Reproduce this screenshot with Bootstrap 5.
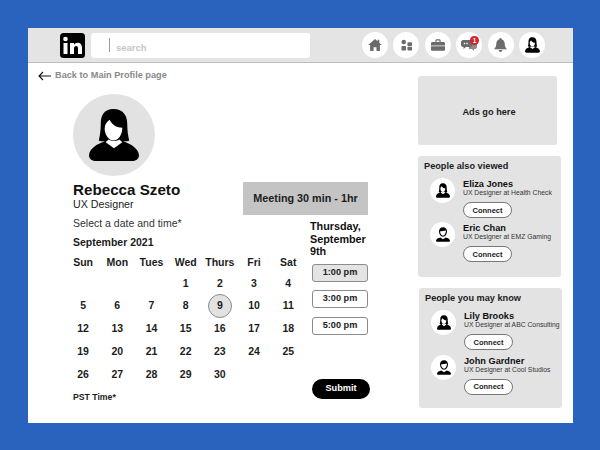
<!DOCTYPE html>
<html lang="en"><head><meta charset="utf-8"><title>Book a meeting</title>
<link href="https://cdn.jsdelivr.net/npm/bootstrap@5.3.0/dist/css/bootstrap.min.css" rel="stylesheet">
<style>
html,body{height:450px;overflow:hidden}
body{background:#2a63bd;padding:28px 27px 27px 28px;font-family:"Liberation Sans",Arial,sans-serif;color:#1c1c1c}
.sheet{height:395px;background:#fff}
.topbar{height:35px;background:#e4e4e4;border-bottom:1px solid #bdbdbd;padding:0 0 0 32px;flex:none}
.logo-mark{width:25px;height:25px;flex:none}
.searchbar{width:219px;height:25px;background:#fff;border-radius:3px;margin-left:6px;padding-left:18px;font-size:9.5px;font-weight:700;color:#c6c6c6}
.search-caret{width:1px;height:14px;background:#9a9a9a;margin-right:6px}
.search-word{padding-top:6px}
.nav-icons{margin-left:auto;margin-right:28px;gap:5.5px}
.nav-circle{width:26px;height:26px;background:#fff;border-radius:50%;position:relative;flex:none}
.nav-badge{position:absolute;top:4px;right:3px;width:9px;height:9px;border-radius:50%;background:#d32029;color:#fff;font-size:6.5px;font-weight:700;line-height:9px;text-align:center}
.back-row{font-size:9.2px;font-weight:700;color:#8a8a8a;padding:6px 0 0 10px;height:19px;line-height:13px}
.main-col{width:390px;flex:none}
.profile-area{padding:12px 0 0 45px}
.big-avatar{width:82px;height:82px;background:#e2e2e2;border-radius:50%}
.person-head{width:295px}
.person-name{font-size:15.2px;font-weight:700;line-height:15px;margin-top:1.5px;color:#111}
.person-role{font-size:10.7px;line-height:14px;color:#222}
.meeting-box{width:125px;height:33px;background:#c4c4c4;font-size:10.8px;font-weight:700;margin-top:2px;margin-left:auto}
.select-label{font-size:10.5px;line-height:13px;color:#333;margin-top:2px}
.month-label{font-size:10.5px;font-weight:700;line-height:13px;margin-top:6px}
.cal-wrap{width:237px;flex:none}
.cal-grid{display:grid;grid-template-columns:repeat(7,34.2px);grid-template-rows:18px repeat(5,22.75px);margin:5px 0 0 -7px;font-size:10.5px;font-weight:700;align-items:center;justify-items:center;color:#1c1c1c}
.cal-gap{grid-column:span 3}
.picked{width:24px;height:24px;border-radius:50%;background:#e2e2e2;border:1px solid #8a8a8a;display:flex;align-items:center;justify-content:center}
.pst{font-size:8.7px;font-weight:700;line-height:12px;margin-top:5px}
.time-col{width:60px;flex:none}
.day-title{font-size:10.8px;font-weight:700;line-height:12.5px;margin-top:5px;color:#111}
.slot{width:56px;height:18px;border:1px solid #8c8c8c;border-radius:3px;background:#fff;font-size:9.2px;font-weight:700;padding:0;line-height:15px;margin-left:2px;color:#222;display:block;margin-top:8px}
.slot.slot-first{margin-top:6px;background:#e4e4e4}
.slot.slot-last{margin-top:9px}
.send-btn{width:58px;height:20px;background:#000;color:#fff;border:0;border-radius:10px;font-size:9.2px;font-weight:700;padding:0;margin:44px 0 0 2px;display:block}
.side-col{width:145px;padding-top:13px;flex:none}
.ad-box{width:139px;height:69px;background:#e3e3e3;border-radius:3px;font-size:9.2px;font-weight:700;padding:4px 0 0 3px}
.people-box{background:#e3e3e3;border-radius:3px;width:143px;height:121px;padding:5px 6px 0;margin-top:11px}
.people-box.people-second{margin-left:1px;height:120px}
.people-title{font-size:9.2px;font-weight:700;line-height:11px;margin-bottom:6px}
.person-row{padding-left:6px;gap:8px;height:44px}
.people-second .person-row{height:44.5px}
.mini-avatar{width:25px;height:25px;border-radius:50%;background:#fff;flex:none}
.p-name{font-size:9.2px;font-weight:700;line-height:10px;margin-top:1px;color:#111}
.p-role{font-size:6.8px;line-height:8px;color:#333;white-space:nowrap}
.connect{width:49px;height:16px;border:1px solid #777;border-radius:8px;background:#fff;font-size:7.5px;font-weight:700;padding:0;line-height:13px;margin-top:5px;display:block;color:#222}
</style></head>
<body>
<svg width="0" height="0" class="d-block"><defs>
<symbol id="woman" viewBox="0 0 51 53"><path d="M25 0C15 0 12 7 12 15c0 7-1 13-2 17 1 1 4 1 6 1C8 36 1 40 0 47c0 3 2 6 6 6h39c4 0 6-3 6-6-1-7-8-11-16-14 2 0 5 0 6-1-1-4-2-10-2-17C39 7 35 0 25 0z" fill="#000"/><path d="M21 11c-3 2-5 5-5 9 0 6 4 12 9 12s9-6 9-13c-5 0-10-2-13-8z" fill="#fff"/><path d="M17 34l3-3c3 2 8 2 11 0l3 3-8.500 6z" fill="#fff"/></symbol>
<symbol id="man" viewBox="0 0 51 53"><path d="M25.500 0C16 0 11 6 11 15c0 10 6 20 14.500 20S40 25 40 15C40 6 35 0 25.500 0z" fill="#000"/><path d="M15 15c6 0 15-1 21-3 1 8-5 19-10.500 19S14 23 15 15z" fill="#fff"/><path d="M16 37C8 39 1 42 0 48c0 3 2 5 5 5h41c3 0 5-2 5-5-1-6-8-9-16-11l-9.500 7z" fill="#000"/></symbol>
</defs></svg>
<div class="sheet d-flex flex-column">
 <header class="topbar d-flex align-items-center">
  <svg class="logo-mark" viewBox="0 0 25 25"><rect width="25" height="25" rx="3.500" fill="#000"/><rect x="3.500" y="10" width="4" height="11" fill="#fff"/><circle cx="5.500" cy="6" r="2.300" fill="#fff"/><path d="M10 10h4v1.700c.8-1.200 2-2 3.700-2 3 0 4.300 2 4.300 5V21h-4v-5.500c0-1.600-.6-2.600-1.900-2.600-1.400 0-2.100 1-2.100 2.600V21h-4z" fill="#fff"/></svg>
  <div class="searchbar d-flex align-items-center"><span class="search-caret"></span><span class="search-word">search</span></div>
  <nav class="nav-icons d-flex align-items-center">
   <span class="nav-circle d-flex align-items-center justify-content-center"><svg width="14" height="12" viewBox="0 0 16 14"><path d="M8 0L0 7h2.300v7h4V9.500h3.400V14h4V7H16l-3-2.600V1h-2v1.700z" fill="#6b6b6b"/></svg></span>
   <span class="nav-circle d-flex align-items-center justify-content-center"><svg width="11" height="12" viewBox="0 0 12 12"><circle cx="3" cy="2.800" r="2.500" fill="#6b6b6b"/><rect x="7" y="3" width="5" height="4" rx=".8" fill="#6b6b6b"/><rect x=".5" y="7" width="5" height="5" rx=".8" fill="#6b6b6b"/><rect x="7" y="8" width="5" height="4" rx=".8" fill="#6b6b6b"/></svg></span>
   <span class="nav-circle d-flex align-items-center justify-content-center"><svg width="14" height="12" viewBox="0 0 16 13"><path d="M5 3V1.500C5 .7 5.700 0 6.500 0h3C10.300 0 11 .7 11 1.500V3h3.500c.8 0 1.500.7 1.500 1.500V7H0V4.500C0 3.700.7 3 1.500 3zm1.300 0h3.400V1.300H6.300zM0 8h16v3.500c0 .8-.7 1.500-1.500 1.500h-13C.7 13 0 12.300 0 11.500z" fill="#6b6b6b"/></svg></span>
   <span class="nav-circle d-flex align-items-center justify-content-center"><svg width="16" height="12" viewBox="0 0 16 12"><path d="M8 4h6c1 0 2 1 2 2v2c0 1-1 2-2 2h-1v2l-2-2H8z" fill="#8a8a8a"/><path d="M2 1h7c1 0 2 1 2 2v3c0 1-1 2-2 2H5L2.500 10V8H2C1 8 0 7 0 6V3c0-1 1-2 2-2z" fill="#6b6b6b"/><circle cx="3.500" cy="4.500" r=".8" fill="#fff"/><circle cx="6" cy="4.500" r=".8" fill="#fff"/></svg><span class="nav-badge">1</span></span>
   <span class="nav-circle d-flex align-items-center justify-content-center"><svg width="13" height="14" viewBox="0 0 14 15"><path d="M7 0c.7 0 1.200.5 1.200 1.200C10.500 1.800 11.500 3.700 11.500 6c0 3 .8 4.500 2.500 6H0c1.700-1.500 2.500-3 2.500-6 0-2.300 1-4.200 3.300-4.800C5.800.5 6.300 0 7 0z" fill="#6b6b6b"/><path d="M5 13h4c0 1.200-.9 2-2 2s-2-.8-2-2z" fill="#6b6b6b"/></svg></span>
   <span class="nav-circle d-flex align-items-center justify-content-center"><svg width="15" height="16"><use href="#woman"/></svg></span>
  </nav>
 </header>
 <div class="d-flex flex-grow-1">
  <main class="main-col">
   <div class="back-row d-flex align-items-center"><svg width="13" height="10" viewBox="0 0 13 10" class="me-1"><path d="M13 5H1M5 1L1 5l4 4" fill="none" stroke="#111" stroke-width="1.100"/></svg>Back to Main Profile page</div>
   <div class="profile-area">
    <div class="big-avatar d-flex align-items-center justify-content-center"><svg width="50" height="52"><use href="#woman"/></svg></div>
    <div class="person-head d-flex align-items-start mt-1">
     <div><div class="person-name">Rebecca Szeto</div><div class="person-role">UX Designer</div></div>
     <div class="meeting-box d-flex align-items-center justify-content-center">Meeting 30 min - 1hr</div>
    </div>
    <div class="d-flex">
     <div class="cal-wrap">
      <div class="select-label">Select a date and time*</div>
      <div class="month-label">September 2021</div>
      <div class="cal-grid">
       <span>Sun</span><span>Mon</span><span>Tues</span><span>Wed</span><span>Thurs</span><span>Fri</span><span>Sat</span>
       <span class="cal-gap"></span><span>1</span><span>2</span><span>3</span><span>4</span>
       <span>5</span><span>6</span><span>7</span><span>8</span><span class="picked">9</span><span>10</span><span>11</span>
       <span>12</span><span>13</span><span>14</span><span>15</span><span>16</span><span>17</span><span>18</span>
       <span>19</span><span>20</span><span>21</span><span>22</span><span>23</span><span>24</span><span>25</span>
       <span>26</span><span>27</span><span>28</span><span>29</span><span>30</span>
      </div>
      <div class="pst">PST Time*</div>
     </div>
     <div class="time-col">
      <div class="day-title">Thursday, September 9th</div>
      <button type="button" class="btn slot slot-first">1:00 pm</button>
      <button type="button" class="btn slot">3:00 pm</button>
      <button type="button" class="btn slot slot-last">5:00 pm</button>
      <button type="button" class="btn send-btn">Submit</button>
     </div>
    </div>
   </div>
  </main>
  <aside class="side-col">
   <div class="ad-box d-flex align-items-center justify-content-center">Ads go here</div>
   <section class="people-box">
    <div class="people-title">People also viewed</div>
    <div class="person-row d-flex"><span class="mini-avatar d-flex align-items-center justify-content-center"><svg width="14" height="15"><use href="#woman"/></svg></span><div><div class="p-name">Eliza Jones</div><div class="p-role">UX Designer at Health Check</div><button type="button" class="btn connect">Connect</button></div></div>
    <div class="person-row d-flex"><span class="mini-avatar d-flex align-items-center justify-content-center"><svg width="14" height="15"><use href="#man"/></svg></span><div><div class="p-name">Eric Chan</div><div class="p-role">UX Designer at EMZ Gaming</div><button type="button" class="btn connect">Connect</button></div></div>
   </section>
   <section class="people-box people-second">
    <div class="people-title">People you may know</div>
    <div class="person-row d-flex"><span class="mini-avatar d-flex align-items-center justify-content-center"><svg width="14" height="15"><use href="#woman"/></svg></span><div><div class="p-name">Lily Brooks</div><div class="p-role">UX Designer at ABC Consulting</div><button type="button" class="btn connect">Connect</button></div></div>
    <div class="person-row d-flex"><span class="mini-avatar d-flex align-items-center justify-content-center"><svg width="14" height="15"><use href="#man"/></svg></span><div><div class="p-name">John Gardner</div><div class="p-role">UX Designer at Cool Studios</div><button type="button" class="btn connect">Connect</button></div></div>
   </section>
  </aside>
 </div>
</div>
</body></html>
